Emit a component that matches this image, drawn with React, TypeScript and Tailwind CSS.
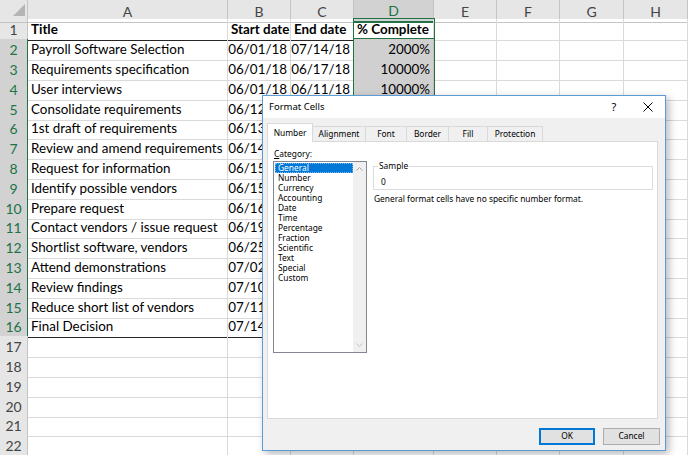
import React from 'react';

const cols = ['A', 'B', 'C', 'D', 'E', 'F', 'G', 'H'];

const data: string[][] = [
  ['Title', 'Start date', 'End date', '% Complete'],
  ['Payroll Software Selection', '06/01/18', '07/14/18', '2000%'],
  ['Requirements specification', '06/01/18', '06/17/18', '10000%'],
  ['User interviews', '06/01/18', '06/11/18', '10000%'],
  ['Consolidate requirements', '06/12/18', '06/13/18', '10000%'],
  ['1st draft of requirements', '06/13/18', '06/14/18', '10000%'],
  ['Review and amend requirements', '06/14/18', '06/17/18', '10000%'],
  ['Request for information', '06/15/18', '06/17/18', '10000%'],
  ['Identify possible vendors', '06/15/18', '06/18/18', '10000%'],
  ['Prepare request', '06/16/18', '06/18/18', '10000%'],
  ['Contact vendors / issue request', '06/19/18', '06/24/18', '10000%'],
  ['Shortlist software, vendors', '06/25/18', '07/01/18', '10000%'],
  ['Attend demonstrations', '07/02/18', '07/09/18', '10000%'],
  ['Review findings', '07/10/18', '07/10/18', '10000%'],
  ['Reduce short list of vendors', '07/11/18', '07/13/18', '10000%'],
  ['Final Decision', '07/14/18', '07/14/18', '10000%'],
];

const categories = [
  'General', 'Number', 'Currency', 'Accounting', 'Date', 'Time',
  'Percentage', 'Fraction', 'Scientific', 'Text', 'Special', 'Custom',
];

const tabs = [
  { label: 'Number', w: 'w-[46px]' },
  { label: 'Alignment', w: 'w-[53px]' },
  { label: 'Font', w: 'w-[41px]' },
  { label: 'Border', w: 'w-[42px]' },
  { label: 'Fill', w: 'w-[39px]' },
  { label: 'Protection', w: 'w-[55px]' },
];

const rowGrid = 'grid grid-cols-[28px_200px_63px_63px_80px_63px_63px_64px_64px]';

const rowHeight = (i: number) => (i % 5 === 4 ? 'h-[19px]' : 'h-[20px]');

const Sheet: React.FC = () => {
  return (
    <div className="font-['Lato',sans-serif] text-[13.4px] text-black">
      {/* column headers */}
      <div className={`${rowGrid} h-[19px] bg-[#e6e6e6] text-[#444] text-[14px]`}>
        <div className="relative border-r border-b border-[#c4c4c4]">
          <svg className="absolute left-[13px] top-[4px]" width="12" height="12" viewBox="0 0 12 12">
            <polygon points="12,0 12,12 0,12" fill="#b4b4b4" />
          </svg>
        </div>
        {cols.map((c) => (
          <div
            key={c}
            className={
              c === 'D'
                ? 'flex items-center justify-center bg-[#d2d2d2] text-[#217346] border-r border-[#c4c4c4] border-b-2 border-b-[#217346]'
                : 'flex items-center justify-center border-r border-b border-[#c4c4c4]'
            }
          >
            {c}
          </div>
        ))}
      </div>

      {Array.from({ length: 22 }).map((_, i) => {
        const r = i + 1;
        const row = data[i] || [];
        const inRange = r >= 2 && r <= 16;
        const heavyBottom = r === 1 || r === 16;
        return (
          <div key={r} className={`${rowGrid} ${rowHeight(i)}`}>
            <div
              className={
                inRange
                  ? 'flex items-center justify-center text-[14px] bg-[#d2d2d2] text-[#217346] border-b border-[#bdbdbd] border-r border-r-[#217346]'
                  : 'flex items-center justify-center text-[14px] bg-[#e6e6e6] text-[#444] border-b border-r border-[#c4c4c4]'
              }
            >
              {r}
            </div>
            {cols.map((c, ci) => {
              const text = row[ci] || '';
              const bold = r === 1 && ci < 4;
              const right = r > 1 && (ci === 1 || ci === 2 || ci === 3);
              let cls = 'flex items-center overflow-hidden whitespace-nowrap px-[3px] border-r border-b border-[#dadada]';
              if (heavyBottom && ci < 3) cls = 'flex items-center overflow-hidden whitespace-nowrap px-[3px] border-r border-[#dadada] border-b border-b-[#262626]';
              if (c === 'D' && inRange) cls = 'flex items-center overflow-hidden whitespace-nowrap px-[3px] bg-[#d0d0d0] border-r border-b border-[#bfbfbf]';
              return (
                <div
                  key={c}
                  className={`${cls} ${bold ? 'font-bold px-[1px]' : ''} ${right ? 'justify-end' : ''}`}
                >
                  {text}
                </div>
              );
            })}
          </div>
        );
      })}

      {/* selection outline D1:D16 */}
      <div className="absolute left-[353px] top-[18px] w-[82px] h-[319px] border border-[#217346] pointer-events-none" />
      <div className="absolute left-[354px] top-[38px] w-[80px] h-px bg-[#217346] pointer-events-none" />
    </div>
  );
};

const FormatCells: React.FC = () => {
  return (
    <div className="absolute left-[262px] top-[95px] w-[404px] h-[356px] flex flex-col border border-[#5d9bd6] bg-[#f0f0f0] shadow-[3px_3px_8px_rgba(0,0,0,0.28)] font-['Noto_Sans',sans-serif] text-[8.4px] text-black">
      {/* title bar */}
      <div className="h-[22px] bg-white flex items-center justify-between">
        <span className="pl-[6px] text-[9.5px]">Format Cells</span>
        <div className="flex h-full">
          <div className="w-[34px] flex items-center justify-center text-[11px]">?</div>
          <div className="w-[34px] flex items-center justify-center">
            <svg width="10" height="10" viewBox="0 0 10 10">
              <path d="M0.5 0.5 L9.5 9.5 M9.5 0.5 L0.5 9.5" stroke="#000" strokeWidth="1" />
            </svg>
          </div>
        </div>
      </div>

      {/* tabs */}
      <div className="flex items-end pl-[4px] mt-[5px] h-[18px]">
        {tabs.map((t, i) =>
          i === 0 ? (
            <div
              key={t.label}
              className={`${t.w} h-[19px] relative z-10 mb-[-1px] flex items-center justify-center bg-white border border-b-0 border-[#d9d9d9]`}
            >
              {t.label}
            </div>
          ) : (
            <div
              key={t.label}
              className={`${t.w} h-[15px] flex items-center justify-center bg-[#f0f0f0] border-t border-r border-[#d9d9d9]`}
            >
              {t.label}
            </div>
          )
        )}
      </div>

      {/* panel */}
      <div className="ml-[4px] w-[391px] h-[278px] bg-white border border-[#d9d9d9] flex">
        <div className="pl-[5px] pt-[6px] flex flex-col">
          <div className="h-[12px] leading-[12px] pl-px">
            <span className="underline">C</span>ategory:
          </div>
          <div className="mt-px w-[94px] h-[192px] border border-[#828790] flex">
            <div className="flex-1 pt-px pl-px">
              {categories.map((c, i) => (
                <div
                  key={c}
                  className={
                    i === 0
                      ? 'h-[10px] leading-[8px] pl-[2px] bg-[#0078d7] text-white border border-dotted border-[#7fb8eb]'
                      : 'h-[10px] leading-[10px] pl-[3px]'
                  }
                >
                  {c}
                </div>
              ))}
            </div>
            <div className="w-[13px] bg-[#f0f0f0] flex flex-col justify-between items-center py-[5px]">
              <svg width="7" height="4" viewBox="0 0 7 4">
                <path d="M0.5 3.5 L3.5 0.5 L6.5 3.5" stroke="#a6a6a6" fill="none" strokeWidth="1" />
              </svg>
              <svg width="7" height="4" viewBox="0 0 7 4">
                <path d="M0.5 0.5 L3.5 3.5 L6.5 0.5" stroke="#c2c2c2" fill="none" strokeWidth="1" />
              </svg>
            </div>
          </div>
        </div>

        <div className="ml-[6px] pt-[24px] flex flex-col">
          <div className="relative w-[280px] h-[24px] border border-[#dcdcdc]">
            <span className="absolute left-[4px] top-[-7px] bg-white px-px leading-[12px]">Sample</span>
            <span className="absolute left-[7px] top-[9px] leading-[12px]">0</span>
          </div>
          <div className="mt-[3px] pl-px leading-[12px]">
            General format cells have no specific number format.
          </div>
        </div>
      </div>

      {/* buttons */}
      <div className="flex justify-end gap-[8px] pr-[5px] mt-[9px]">
        <div className="w-[56px] h-[17px] flex items-center justify-center bg-[#e1e1e1] border-2 border-[#0078d7]">
          OK
        </div>
        <div className="w-[57px] h-[17px] flex items-center justify-center bg-[#e1e1e1] border border-[#adadad]">
          Cancel
        </div>
      </div>
    </div>
  );
};

export default function App() {
  return (
    <div className="relative w-[688px] h-[455px] overflow-hidden bg-white">
      <Sheet />
      <FormatCells />
    </div>
  );
}
